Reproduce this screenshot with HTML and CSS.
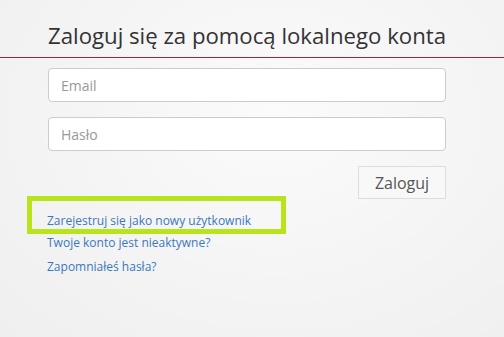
FILE: index.html
```html
<!DOCTYPE html>
<html lang="pl">
<head>
    <meta charset="UTF-8">
    <meta name="viewport" content="width=device-width, initial-scale=1.0">
    <title>Logowanie</title>

    <link rel="stylesheet" href="styles.css">
</head>
<body>

    <h2 class="title">Zaloguj się za pomocą lokalnego konta</h2>

    <form id="loginForm" class="login-form">
        <input type="email" id="email" name="email" placeholder="Email">
        <input type="password" id="password" name="password" placeholder="Hasło">
        <div class="actions">
            <button type="button">Zaloguj</button>
        </div>
    </form>

    <div class="links">
        <p class="link-item highlight"><a href="#">Zarejestruj się jako nowy użytkownik</a></p>
        <p class="link-item"><a href="#">Twoje konto jest nieaktywne?</a></p>
        <p class="link-item"><a href="#">Zapomniałeś hasła?</a></p>
    </div>

</body>
</html>
```

FILE: styles.css
```css
html {
    height: 100%;
}

body {
    font-family: "Open Sans", sans-serif;
    margin: 0;
    padding: 0;
    min-height: 100%;
    background: radial-gradient(ellipse at 55% 35%, #fbfbfb 0%, #f4f4f4 55%, #efefef 100%);
}

.title {
    margin: 0;
    padding: 20px 0 5px 48px;
    font-size: 22.2px;
    font-weight: 400;
    line-height: 32px;
    color: #333;
    border-bottom: 1px solid #a2263a;
}

.login-form {
    width: 398px;
    margin: 10px 0 0 48px;
}

.login-form input {
    display: block;
    width: 100%;
    height: 34px;
    padding: 0 12px;
    margin-bottom: 15px;
    box-sizing: border-box;
    border: 1px solid #ccc;
    border-radius: 4px;
    background-color: #fff;
    font-family: "Open Sans", sans-serif;
    font-size: 14px;
    color: #555;
}

.login-form input::placeholder {
    color: #999;
}

.actions {
    display: flex;
    justify-content: flex-end;
}

button {
    width: 88px;
    height: 33px;
    background-color: #f8f8f8;
    border: 1px solid #ddd;
    color: #555;
    font-family: "Open Sans", sans-serif;
    font-size: 16px;
    cursor: pointer;
}

.links {
    margin-top: -3px;
    padding-left: 27px;
}

.link-item {
    margin: 0;
    padding-left: 20px;
    font-size: 12px;
    line-height: 24px;
}

.link-item.highlight {
    width: 234px;
    padding: 11px 0 0 15px;
    line-height: 17px;
    border: 5px solid #b9e31a;
    margin-bottom: -3px;
}

.link-item a {
    color: #3a78bd;
    text-decoration: none;
}
```
